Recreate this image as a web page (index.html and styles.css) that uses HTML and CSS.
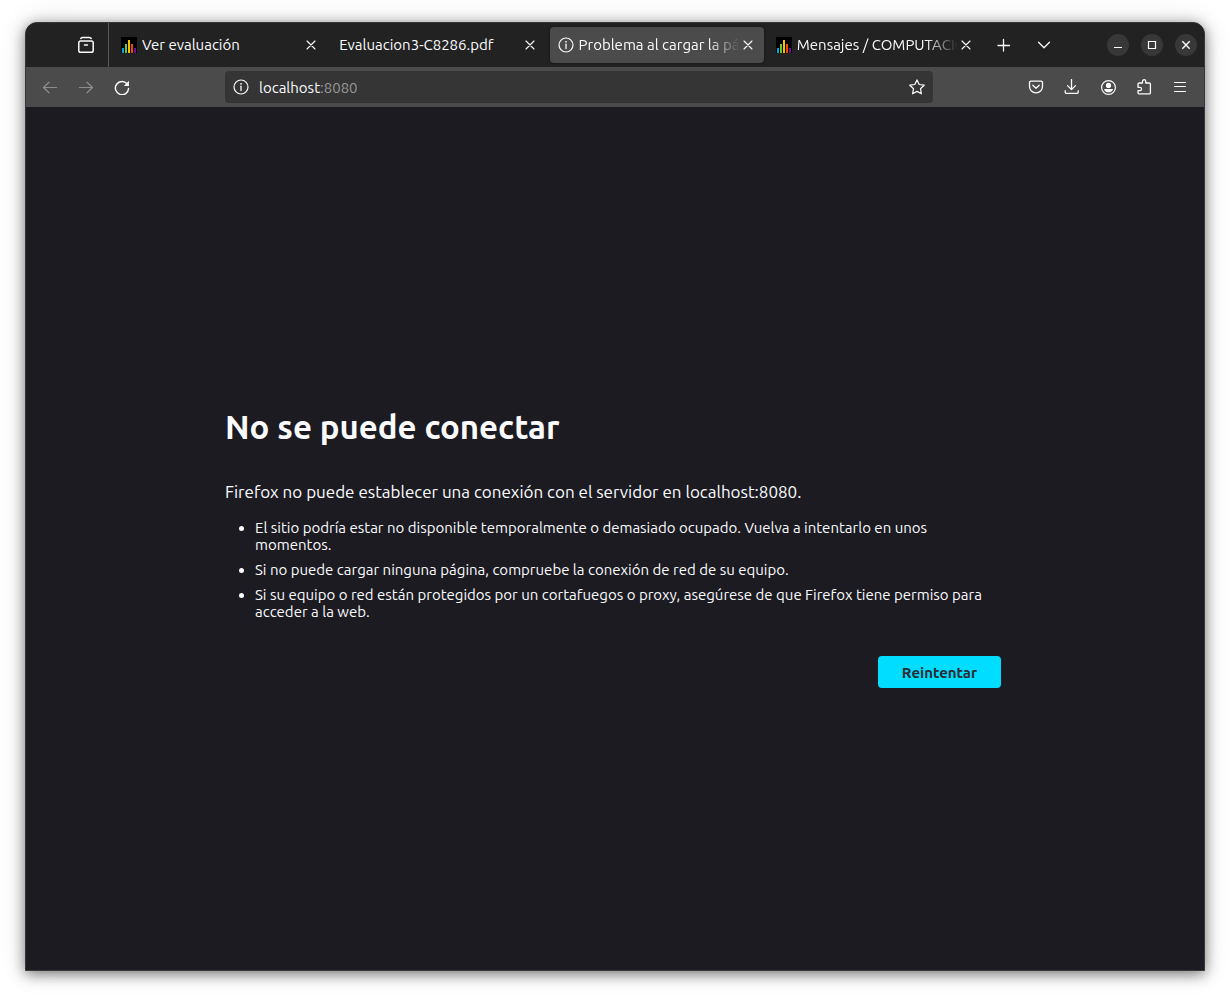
FILE: index.html
```html
<!DOCTYPE html>
<html lang="es">
<head>
<meta charset="utf-8">
<meta name="viewport" content="width=device-width, initial-scale=1">
<title>Problema al cargar la página</title>
<link rel="stylesheet" href="styles.css">
</head>
<body>
<svg class="defs" aria-hidden="true">
  <symbol id="close" viewBox="0 0 16 16"><path d="M4 4l8 8M12 4l-8 8" fill="none" stroke="currentColor" stroke-width="1.1" stroke-linecap="round"/></symbol>
  <symbol id="info" viewBox="0 0 16 16"><circle cx="8" cy="8" r="7" fill="none" stroke="currentColor" stroke-width="1.2"/><path d="M8 7.2v4.3" stroke="currentColor" stroke-width="1.3" stroke-linecap="round"/><circle cx="8" cy="4.8" r=".9" fill="currentColor"/></symbol>
  <symbol id="chart" viewBox="0 0 16 16"><path d="M0 0h16v16H0z" fill="#000"/><path d="M1 11h2v5H1z" fill="#00a5e8"/><path d="M4 7h2v9H4z" fill="#6bc82c"/><path d="M7 3h2v13H7z" fill="#f5c400"/><path d="M10 7h2v9h-2z" fill="#f04a00"/><path d="M13 11h2v5h-2z" fill="#7a0a9c"/></symbol>
</svg>
<div class="window">
  <header class="tabbar">
    <button class="view" aria-label="Vista de Firefox"><svg class="icon18" viewBox="0 0 18 18"><g fill="none" stroke="currentColor" stroke-width="1.5" stroke-linecap="round"><path d="M3.8 2.5C4.1 1.5 4.6 1.5 5.5 1.5h7c.9 0 1.4 0 1.7 1"/><rect x="1.8" y="5" width="14.4" height="11.2" rx="1.8"/><path d="M7.5 9h3"/></g></svg></button>
    <nav class="tabs" aria-label="Pestañas">
      <div class="tab"><svg class="icon"><use href="#chart"/></svg><span class="title">Ver evaluación</span><button class="close" aria-label="Cerrar"><svg class="icon"><use href="#close"/></svg></button></div>
      <div class="tab"><span class="title">Evaluacion3-C8286.pdf</span><button class="close" aria-label="Cerrar"><svg class="icon"><use href="#close"/></svg></button></div>
      <div class="tab selected"><svg class="icon"><use href="#info"/></svg><span class="title fade">Problema al cargar la página</span><button class="close" aria-label="Cerrar"><svg class="icon"><use href="#close"/></svg></button></div>
      <div class="tab"><svg class="icon"><use href="#chart"/></svg><span class="title fade">Mensajes / COMPUTACION</span><button class="close" aria-label="Cerrar"><svg class="icon"><use href="#close"/></svg></button></div>
    </nav>
    <div class="tabtools">
      <button class="tool" aria-label="Nueva pestaña"><svg class="icon" viewBox="0 0 16 16"><path d="M7.500 2.500v11.500M2 8.500h11.500" stroke="currentColor" stroke-width="1.300" stroke-linecap="round"/></svg></button>
      <button class="tool" aria-label="Listar pestañas"><svg class="icon" viewBox="0 0 16 16"><path d="M2.500 5.200L8 10.700l5.500-5.500" fill="none" stroke="currentColor" stroke-width="1.300" stroke-linecap="round" stroke-linejoin="round"/></svg></button>
    </div>
    <div class="controls">
      <button class="control" aria-label="Minimizar"><svg class="icon" viewBox="0 0 16 16"><path d="M4 10.500h8" stroke="currentColor"/></svg></button>
      <button class="control" aria-label="Maximizar"><svg class="icon" viewBox="0 0 16 16"><path d="M4.500 4.500h7v7h-7z" fill="none" stroke="currentColor" stroke-width="1.200"/></svg></button>
      <button class="control" aria-label="Cerrar ventana"><svg class="icon" viewBox="0 0 16 16"><path d="M4.300 4.300l7.400 7.400M11.700 4.300l-7.400 7.400" stroke="currentColor" stroke-width="1.400"/></svg></button>
    </div>
  </header>
  <div class="navbar">
    <button class="tool" disabled aria-label="Atrás"><svg class="icon" viewBox="0 0 16 16"><path d="M14.500 8.500H1.500M7 3.200L1.500 8.500 7 13.800" fill="none" stroke="currentColor" stroke-width="1.200" stroke-linecap="round" stroke-linejoin="round"/></svg></button>
    <button class="tool" disabled aria-label="Adelante"><svg class="icon" viewBox="0 0 16 16"><path d="M1.500 8.500h13M9 3.200L14.500 8.500 9 13.800" fill="none" stroke="currentColor" stroke-width="1.200" stroke-linecap="round" stroke-linejoin="round"/></svg></button>
    <button class="tool" aria-label="Recargar"><svg class="icon" viewBox="0 0 16 16"><path d="M13.200 5A6.600 6.600 0 1 0 14.600 9.400" fill="none" stroke="currentColor" stroke-width="1.400" stroke-linecap="round"/><path d="M15 1.800v5.200H9.800z" fill="currentColor"/></svg></button>
    <div class="urlbar">
      <svg class="icon"><use href="#info"/></svg>
      <a class="url" href="#">localhost<span class="port">:8080</span></a>
      <button class="star" aria-label="Añadir a marcadores"><svg class="icon" viewBox="0 0 16 16"><path d="M8 .9l2.200 4.600 5 .7-3.700 3.500.9 5.100L8 12.400l-4.400 2.400.9-5.100L.8 6.200l5-.7z" fill="none" stroke="currentColor" stroke-width="1.200" stroke-linejoin="round"/></svg></button>
    </div>
    <button class="tool" aria-label="Guardar en Pocket"><svg class="icon" viewBox="0 0 16 16"><g fill="none" stroke="currentColor" stroke-width="1.300" stroke-linecap="round" stroke-linejoin="round"><path d="M3 2.100h10a1.500 1.500 0 0 1 1.500 1.500v3.800a6.500 6.500 0 0 1-13 0V3.600A1.500 1.500 0 0 1 3 2.100z"/><path d="M4.800 6.200L8 9.200l3.200-3"/></g></svg></button>
    <button class="tool" aria-label="Descargas"><svg class="icon" viewBox="0 0 16 16"><path d="M7.500 .6v9.600M3.500 6.600l4 4 4-4M1.200 11.700v1.400a1.300 1.300 0 0 0 1.300 1.300h10.400a1.300 1.300 0 0 0 1.300-1.300v-1.400" fill="none" stroke="currentColor" stroke-width="1.300" stroke-linecap="round" stroke-linejoin="round"/></svg></button>
    <button class="tool" aria-label="Cuenta"><svg class="icon" viewBox="0 0 16 16"><circle cx="8.500" cy="8.500" r="6.900" fill="none" stroke="currentColor" stroke-width="1.200"/><circle cx="8.500" cy="6.400" r="2.600" fill="currentColor"/><path d="M4 9.900h9c-.5 2.100-2.200 3.400-4.500 3.400S4.500 12 4 9.900z" fill="currentColor"/></svg></button>
    <button class="tool" aria-label="Extensiones"><svg class="icon" viewBox="0 0 16 16"><path d="M2 6.600V5.200c0-.7.500-1.200 1.200-1.200H6.500V2.300a1.600 1.600 0 0 1 3.200 0V4h3.500c.7 0 1.200.5 1.200 1.200v8.500c0 .7-.5 1.200-1.200 1.200H3.200c-.7 0-1.200-.5-1.200-1.200v-2h1.900a1.700 1.700 0 0 0 0-3.400H2z" fill="none" stroke="currentColor" stroke-width="1.300" stroke-linejoin="round"/></svg></button>
    <button class="tool" aria-label="Menú"><svg class="icon" viewBox="0 0 16 16"><path d="M2.500 3.500h11M2.500 7.500h11M2.500 12.500h11" stroke="currentColor" stroke-width="1.200" stroke-linecap="round"/></svg></button>
  </div>
  <main class="page">
    <section class="error">
      <h1>No se puede conectar</h1>
      <p>Firefox no puede establecer una conexión con el servidor en localhost:8080.</p>
      <ul>
        <li>El sitio podría estar no disponible temporalmente o demasiado ocupado. Vuelva a intentarlo en unos momentos.</li>
        <li>Si no puede cargar ninguna página, compruebe la conexión de red de su equipo.</li>
        <li>Si su equipo o red están protegidos por un cortafuegos o proxy, asegúrese de que Firefox tiene permiso para acceder a la web.</li>
      </ul>
      <button class="retry">Reintentar</button>
    </section>
  </main>
</div>
</body>
</html>
```

FILE: styles.css
```css
* { box-sizing: border-box; }
body {
  margin: 0;
  min-height: 100vh;
  padding: 22px 25px 28px;
  display: flex;
  background: #fff;
  color: #fbfbfe;
  font: 15px/17px Ubuntu, "Noto Sans", sans-serif;
}
button {
  padding: 0;
  border: 0;
  background: none;
  color: inherit;
  font: inherit;
}
.defs { position: absolute; width: 0; height: 0; }
.icon { display: block; width: 16px; height: 16px; flex: none; }
.icon18 { display: block; width: 18px; height: 18px; }
.window {
  flex: 1;
  min-width: 0;
  display: flex;
  flex-direction: column;
  border: 1px solid #383838;
  border-radius: 12px 12px 0 0;
  overflow: hidden;
  background: #1c1b22;
  box-shadow: 0 3px 14px rgba(0, 0, 0, .5), 0 0 28px rgba(0, 0, 0, .12);
}
.tabbar {
  height: 44px;
  display: flex;
  align-items: center;
  background: #222;
  padding-right: 7px;
}
.view {
  align-self: stretch;
  width: 83px;
  padding-left: 51px;
  border-right: 1px solid #5a5a5a;
}
.tabs {
  flex: 0 1 877px;
  min-width: 0;
  display: flex;
  gap: 4px;
  padding: 0 4px;
}
.tab {
  flex: 1;
  min-width: 0;
  height: 36px;
  padding: 0 8px;
  display: flex;
  align-items: center;
  gap: 5px;
  border-radius: 4px;
}
.selected { background: #4b4b4b; box-shadow: 0 0 3px rgba(0, 0, 0, .5); }
.title {
  flex: 1;
  min-width: 0;
  overflow: hidden;
  white-space: nowrap;
  line-height: 22px;
}
.fade {
  margin-right: -5px;
  -webkit-mask-image: linear-gradient(to left, transparent, #000 32px);
  mask-image: linear-gradient(to left, transparent, #000 32px);
}
.tool {
  width: 36px;
  height: 32px;
  flex: none;
  display: flex;
  align-items: center;
  justify-content: center;
}
.tool:disabled { color: #8d8d8d; }
.tabtools { display: flex; gap: 4px; }
.controls { margin-left: auto; display: flex; gap: 12px; }
.control {
  width: 22px;
  height: 22px;
  display: flex;
  align-items: center;
  justify-content: center;
  border-radius: 50%;
  background: #383838;
}
.navbar {
  height: 40px;
  display: flex;
  align-items: center;
  padding: 0 6px;
  background: #4b4b4b;
}
.urlbar {
  flex: 1;
  min-width: 0;
  height: 32px;
  margin: 0 85px;
  padding: 0 8px;
  display: flex;
  align-items: center;
  gap: 10px;
  border-radius: 4px;
  background: #353535;
}
.url { flex: 1; color: inherit; text-decoration: none; }
.port { color: #969696; }
.page {
  flex: 1;
  display: flex;
  align-items: center;
  justify-content: center;
  padding: 0 4px 0 0;
}
.error {
  width: 776px;
  max-width: 100%;
  display: flex;
  flex-direction: column;
}
h1 { margin: 0; padding: 16px 0; font-size: 33px; line-height: 44px; font-weight: 600; }
p { margin: 14px 0; font-size: 17px; line-height: 26px; }
ul { margin: 0; padding: 0 16px 0 30px; }
li { margin-bottom: 8px; }
.retry {
  align-self: flex-end;
  min-width: 123px;
  height: 32px;
  margin-top: 28px;
  border-radius: 4px;
  background: #00ddff;
  color: #2b2a33;
  font-weight: 600;
}
```
